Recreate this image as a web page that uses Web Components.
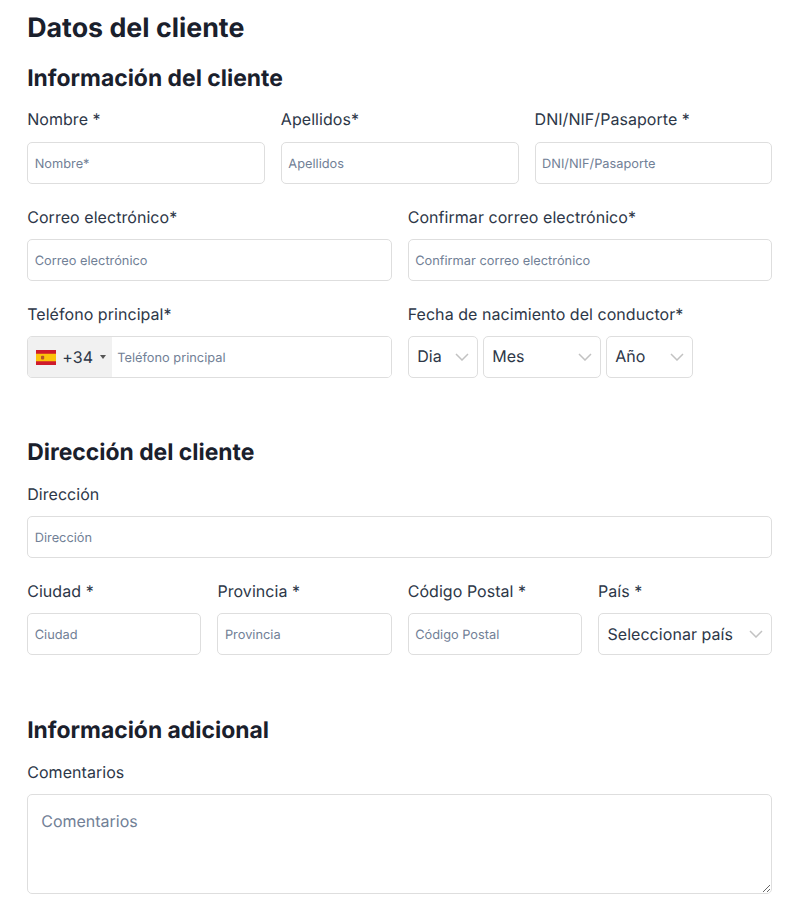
<!DOCTYPE html>
<html lang="es">
<head>
<meta charset="utf-8">
<title>Datos del cliente</title>
<style>
  html, body { margin: 0; background: #fff; }
  body { font-family: Inter, "Liberation Sans", sans-serif; color: #2d3748; text-rendering: geometricPrecision; }
</style>
</head>
<body>
<customer-form>
  <form-section heading="Información del cliente">
    <form-row columns="3" style="--label-top: 0px; --label-gap: 11px">
      <text-field label="Nombre *" placeholder="Nombre*"></text-field>
      <text-field label="Apellidos*" placeholder="Apellidos"></text-field>
      <text-field label="DNI/NIF/Pasaporte *" placeholder="DNI/NIF/Pasaporte"></text-field>
    </form-row>
    <form-row columns="2">
      <text-field label="Correo electrónico*" placeholder="Correo electrónico"></text-field>
      <text-field label="Confirmar correo electrónico*" placeholder="Confirmar correo electrónico"></text-field>
    </form-row>
    <form-row columns="2">
      <phone-field label="Teléfono principal*" placeholder="Teléfono principal"></phone-field>
      <date-field label="Fecha de nacimiento del conductor*"></date-field>
    </form-row>
  </form-section>
  <form-section heading="Dirección del cliente">
    <form-row columns="1">
      <text-field label="Dirección" placeholder="Dirección"></text-field>
    </form-row>
    <form-row columns="4">
      <text-field label="Ciudad *" placeholder="Ciudad"></text-field>
      <text-field label="Provincia *" placeholder="Provincia"></text-field>
      <text-field label="Código Postal *" placeholder="Código Postal"></text-field>
      <select-field label="País *" value="Seleccionar país"></select-field>
    </form-row>
  </form-section>
  <form-section heading="Información adicional">
    <area-field label="Comentarios" placeholder="Comentarios"></area-field>
  </form-section>
</customer-form>

<script>
  const fieldStyles = `
    :host { display: block; min-width: 0; font-family: Inter, "Liberation Sans", sans-serif; text-rendering: geometricPrecision; }
    label {
      display: block; font-size: 16px; line-height: 24px; letter-spacing: 0.05px; color: #2d3748;
      padding-top: var(--label-top, 1px); margin-bottom: var(--label-gap, 10px);
    }
    .box {
      box-sizing: border-box; width: 100%; height: 42px; background: #fff;
      border: 1px solid #dedede; border-radius: 5px; font-family: inherit; outline: none;
      text-rendering: geometricPrecision;
    }
    input.box { padding: 2px 7px 0 6.5px; font-size: 12.8px; color: #2d3748; }
    input::placeholder { color: #718096; opacity: 1; }
    select.box {
      appearance: none; -webkit-appearance: none; padding: 0 8px 0 8.5px; font-size: 16px; letter-spacing: 0.05px; color: #2d3748;
      background: #fff url("data:image/svg+xml,%3Csvg xmlns='http://www.w3.org/2000/svg' width='14' height='8' viewBox='0 0 14 8'%3E%3Cpath d='M1 1l6 6 6-6' fill='none' stroke='%23c2c2c2' stroke-width='1.5'/%3E%3C/svg%3E") no-repeat right 8px center;
    }
  `;

  class FieldElement extends HTMLElement {
    constructor() {
      super();
      this.attachShadow({ mode: "open" });
    }

    connectedCallback() {
      this.render();
    }

    get label() {
      return this.getAttribute("label") || "";
    }

    get placeholder() {
      return this.getAttribute("placeholder") || "";
    }
  }

  class TextField extends FieldElement {
    render() {
      this.shadowRoot.innerHTML = `
        <style>${fieldStyles}</style>
        <label for="f">${this.label}</label>
        <input id="f" class="box" type="text" placeholder="${this.placeholder}">
      `;
    }
  }

  class SelectField extends FieldElement {
    render() {
      const value = this.getAttribute("value");
      this.shadowRoot.innerHTML = `
        <style>${fieldStyles}</style>
        <label for="f">${this.label}</label>
        <select id="f" class="box"><option>${value}</option></select>
      `;
    }
  }

  class PhoneField extends FieldElement {
    render() {
      this.shadowRoot.innerHTML = `
        <style>
          ${fieldStyles}
          .wrap { display: flex; align-items: stretch; padding: 0; overflow: hidden; }
          .dial {
            display: flex; align-items: center; flex: none; width: 84px; box-sizing: border-box;
            padding-left: 8px; background: #f1f1f1; font-size: 16px; letter-spacing: 0.08px; color: #2d3748;
          }
          .dial svg { display: block; margin-right: 6px; }
          .caret {
            width: 0; height: 0; margin-left: 7px;
            border-left: 3px solid transparent; border-right: 3px solid transparent; border-top: 4px solid #555;
          }
          input {
            flex: 1; min-width: 0; border: 0; outline: none; padding: 2px 5px 0;
            font: 12.8px Inter, "Liberation Sans", sans-serif; text-rendering: geometricPrecision;
          }
        </style>
        <label for="f">${this.label}</label>
        <div class="box wrap">
          <div class="dial">
            <svg width="20" height="15" viewBox="0 0 20 15">
              <rect width="20" height="15" fill="#cf1b2b"/>
              <rect y="3.75" width="20" height="7.5" fill="#fcc30b"/>
              <rect x="5" y="5.8" width="3.2" height="3.6" rx="1" fill="#b5532a"/>
            </svg>
            <span>+34</span><span class="caret"></span>
          </div>
          <input id="f" type="text" placeholder="${this.placeholder}">
        </div>
      `;
    }
  }

  class DateField extends FieldElement {
    render() {
      this.shadowRoot.innerHTML = `
        <style>
          ${fieldStyles}
          .parts { display: flex; gap: 5px; }
          .parts select.box { padding-bottom: 2px; }
          .dia { width: 70px; }
          .mes { width: 118px; }
          .ano { width: 87px; }
        </style>
        <label>${this.label}</label>
        <div class="parts">
          <select class="box dia"><option>Dia</option></select>
          <select class="box mes"><option>Mes</option></select>
          <select class="box ano"><option>Año</option></select>
        </div>
      `;
    }
  }

  class AreaField extends FieldElement {
    render() {
      this.shadowRoot.innerHTML = `
        <style>
          ${fieldStyles}
          textarea.box {
            display: block; height: 100px; padding: 14px 13px; resize: vertical;
            font-size: 16px; line-height: 24px; color: #2d3748;
          }
          textarea::placeholder { color: #718096; opacity: 1; }
        </style>
        <label for="f">${this.label}</label>
        <textarea id="f" class="box" placeholder="${this.placeholder}"></textarea>
      `;
    }
  }

  class FormRow extends HTMLElement {
    constructor() {
      super();
      this.attachShadow({ mode: "open" });
    }

    connectedCallback() {
      const columns = this.getAttribute("columns") || 1;
      this.shadowRoot.innerHTML = `
        <style>
          :host {
            display: grid; grid-template-columns: repeat(${columns}, minmax(0, 1fr));
            column-gap: 16px;
          }
        </style>
        <slot></slot>
      `;
    }
  }

  class FormSection extends HTMLElement {
    constructor() {
      super();
      this.attachShadow({ mode: "open" });
    }

    connectedCallback() {
      this.shadowRoot.innerHTML = `
        <style>
          :host { display: block; }
          :host(:last-child) { margin-top: 1px; }
          h2 { margin: 0 0 13px; font-size: 22.9px; line-height: 32px; font-weight: 700; color: #1a202c; }
          .rows { display: grid; row-gap: 20px; }
        </style>
        <h2>${this.getAttribute("heading")}</h2>
        <div class="rows"><slot></slot></div>
      `;
    }
  }

  class CustomerForm extends HTMLElement {
    constructor() {
      super();
      this.attachShadow({ mode: "open" });
    }

    connectedCallback() {
      this.shadowRoot.innerHTML = `
        <style>
          :host { display: block; padding: 8px 23.8px 0 27.2px; font-family: Inter, "Liberation Sans", sans-serif; }
          h1 { margin: 0 0 14px; font-size: 26.8px; line-height: 40px; font-weight: 700; color: #1a202c; }
          .sections { display: grid; row-gap: 58px; }
        </style>
        <h1>Datos del cliente</h1>
        <div class="sections"><slot></slot></div>
      `;
    }
  }

  customElements.define("text-field", TextField);
  customElements.define("select-field", SelectField);
  customElements.define("phone-field", PhoneField);
  customElements.define("date-field", DateField);
  customElements.define("area-field", AreaField);
  customElements.define("form-row", FormRow);
  customElements.define("form-section", FormSection);
  customElements.define("customer-form", CustomerForm);
</script>
</body>
</html>
